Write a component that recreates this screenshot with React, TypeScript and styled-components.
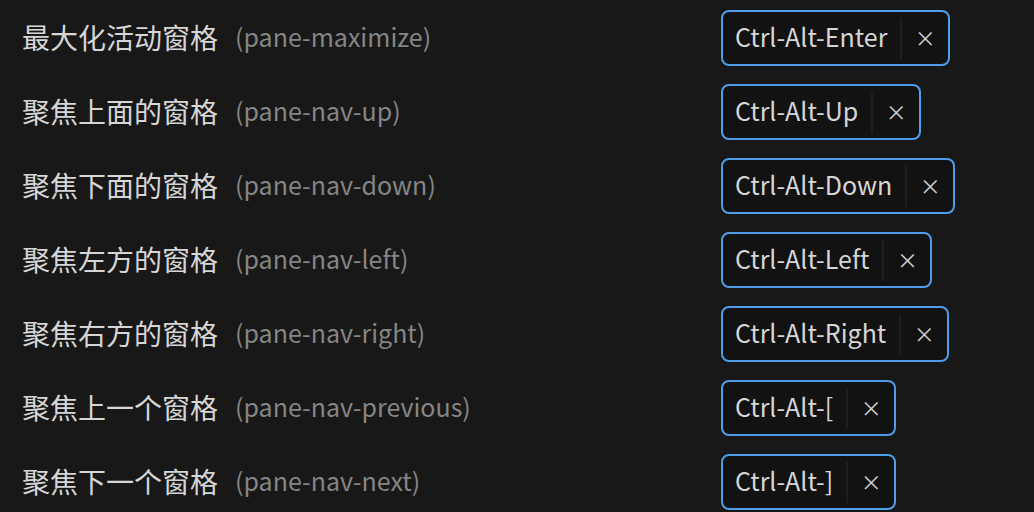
import styled, { createGlobalStyle } from 'styled-components';
import { Fragment } from 'react';

const GlobalStyle = createGlobalStyle`
  html, body {
    margin: 0;
    padding: 0;
    background: #181818;
  }
  body {
    font-family: "Noto Sans CJK SC", "Noto Sans", sans-serif;
    color: #d6d6d6;
    -webkit-font-smoothing: antialiased;
  }
`;

interface IBinding {
  title: string;
  command: string;
  keys: string;
}

const bindings: IBinding[] = [
  { title: '最大化活动窗格', command: 'pane-maximize', keys: 'Ctrl-Alt-Enter' },
  { title: '聚焦上面的窗格', command: 'pane-nav-up', keys: 'Ctrl-Alt-Up' },
  { title: '聚焦下面的窗格', command: 'pane-nav-down', keys: 'Ctrl-Alt-Down' },
  { title: '聚焦左方的窗格', command: 'pane-nav-left', keys: 'Ctrl-Alt-Left' },
  { title: '聚焦右方的窗格', command: 'pane-nav-right', keys: 'Ctrl-Alt-Right' },
  { title: '聚焦上一个窗格', command: 'pane-nav-previous', keys: 'Ctrl-Alt-[' },
  { title: '聚焦下一个窗格', command: 'pane-nav-next', keys: 'Ctrl-Alt-]' },
];

const List = styled.div`
  display: grid;
  grid-template-columns: 699px auto;
  grid-auto-rows: 56px;
  row-gap: 18px;
  padding: 10px 0 0 22px;
  height: 512px;
  box-sizing: border-box;
  overflow: hidden;
`;

const Label = styled.div`
  display: flex;
  align-items: center;
  font-size: 28px;
  line-height: 1;
  white-space: nowrap;
  padding-bottom: 3px;
`;

const Command = styled.span`
  margin-left: 17px;
  font-size: 25px;
  color: #858585;
`;

const KeyCell = styled.div`
  display: flex;
  align-items: center;
`;

const KeyBox = styled.div`
  display: inline-flex;
  align-items: center;
  height: 56px;
  box-sizing: border-box;
  border: 2px solid #4d9de9;
  border-radius: 8px;
  background: #121212;
  padding-left: 12px;
`;

const KeyText = styled.span`
  font-size: 25px;
  line-height: 1;
  color: #d6d6d6;
  padding-right: 13px;
  padding-bottom: 3px;
`;

const Divider = styled.span`
  width: 2px;
  height: 41px;
  background: #1e1e1e;
`;

const RemoveButton = styled.button`
  width: 46px;
  height: 100%;
  border: none;
  background: none;
  padding: 0 0 3px;
  color: #d0d0d0;
  font-family: "Noto Sans CJK SC", "Noto Sans", sans-serif;
  font-size: 21px;
  cursor: pointer;
`;

export default function App() {
  return (
    <>
      <GlobalStyle />
      <List>
        {bindings.map((b) => (
          <Fragment key={b.command}>
            <Label>
              {b.title}
              <Command>({b.command})</Command>
            </Label>
            <KeyCell>
              <KeyBox>
                <KeyText>{b.keys}</KeyText>
                <Divider />
                <RemoveButton>×</RemoveButton>
              </KeyBox>
            </KeyCell>
          </Fragment>
        ))}
      </List>
    </>
  );
}
